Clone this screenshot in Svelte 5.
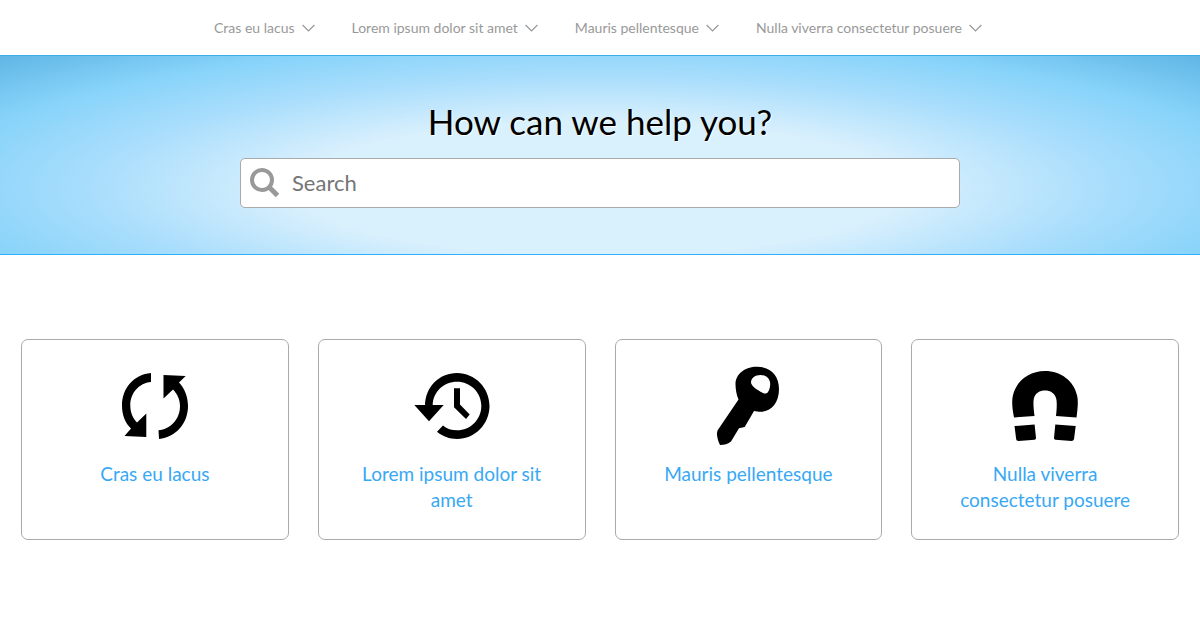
<script lang="ts">
    const categories = [
        { title: "Cras eu lacus", icon: "sync", viewBox: "0 0 110 110" },
        { title: "Lorem ipsum dolor sit amet", icon: "history", viewBox: "-3 0 110 110" },
        { title: "Mauris pellentesque", icon: "key", viewBox: "-2 0 110 110" },
        { title: "Nulla viverra consectetur posuere", icon: "magnet", viewBox: "0 0 110 110" },
    ];

    let query = $state("");
</script>

<nav>
    {#each categories as category}
        <button type="button" class="menu" aria-haspopup="true">
            {category.title}
            <svg class="chevron" viewBox="0 0 13 8" aria-hidden="true">
                <path d="M.6 1 6.500 6.900 12.400 1" />
            </svg>
        </button>
    {/each}
</nav>

<header>
    <h1>How can we help you?</h1>
    <form class="search" role="search" onsubmit={(e) => e.preventDefault()}>
        <svg class="glass" viewBox="0 0 30 30" aria-hidden="true">
            <circle cx="12" cy="12" r="10" />
            <path d="M19 19 27.5 27.5" />
        </svg>
        <input type="search" placeholder="Search" aria-label="Search" bind:value={query}>
    </form>
</header>

<main>
    {#each categories as category}
        <a class="card" href="#{category.icon}">
            <svg class="icon" viewBox={category.viewBox} aria-hidden="true">
                {#if category.icon === "sync"}
                    <path d="M51 23C34 24.500 22 38 22 55.500C22 65 25 73 31 78.500L24.500 86L46.300 87V63.500L37 72.500C32.500 68 30.300 62 30.300 55.500C30.300 43 39 33 51 32Z" />
                    <path d="M59 89C76 87 88 73.500 88 56C88 47 84.500 38 79 32.500L85.700 26L63.500 25V48.500L73 39.500C77.500 44 80 50 80 56C80 69 71 79 58.500 80.300Z" />
                {:else if category.icon === "history"}
                    <path d="M14.300 55H25C25.500 37 39 23 57 23C75 23 89.500 38 89.500 56C89.500 74 75 89 57 89C49.500 89 42.500 86.500 37 81.800L43 75.500C47 78.800 51.500 80.300 57 80.300C70.500 80.300 81.300 69.500 81.300 56C81.300 42.500 70.500 31.700 57 31.700C43.500 31.700 33 42 32.700 55H43.700L29 71.200Z" />
                    <path d="M54 38.300H60V54.500L69.700 64.500L66 69L54 57.300Z" />
                {:else if category.icon === "key"}
                    <path fill-rule="evenodd" d="M40.500 34C40.500 24 50 16.700 62 16.700C75 16.700 84 25 84 39C84 53 76 61.700 66 61.700C63.500 61.700 61 61.300 59 61L49.700 77L44 78.200L36 91.500C33.500 94 29 95 25 95C23.500 92 22 87.500 21.900 83.500L22.500 80.500L43.500 49.500C41.500 45 40.500 39 40.500 34ZM56 32.500C56 36 63 40.500 68 43C70 44 72 43.500 73 42C75 39 75.500 35 75 32C74 27.500 70 25 65.500 25C60 25 56 28 56 32.500Z" />
                {:else}
                    <path d="M24 67.500C22.500 60 21.500 52 22.800 46C26 31 39 21 55 21C71 21 84 31 87.200 46C88.500 52 87.500 60 86.500 67.500L66 66C67 57 67 51 66 48C64.500 43 60.500 40.500 55 40.500C49.500 40.500 45.500 43 44 48C43 51 43.500 58 44.500 66Z" />
                    <path d="M24.500 76 44.600 74.500 46 88Q46 89.500 44.500 89.700L28.500 91Q26.500 91 26.200 89.300ZM65.300 74.500 85.700 76 84 89.300Q83.500 91 81.500 91L65.500 89.700Q64 89.500 64 88Z" />
                {/if}
            </svg>
            <span>{category.title}</span>
        </a>
    {/each}
</main>

<style>
    :global(body) {
        margin: 0;
        background: #fff;
        font-family: Lato, sans-serif;
    }

    nav {
        display: flex;
        justify-content: center;
        gap: 37px;
        height: 55px;
        padding-right: 4px;
    }

    .menu {
        display: flex;
        align-items: center;
        gap: 7px;
        padding: 0;
        border: 0;
        background: none;
        color: #999;
        font-family: inherit;
        font-size: 14px;
        cursor: pointer;
    }

    .chevron {
        width: 13px;
        height: 8px;
        fill: none;
        stroke: #999;
        stroke-width: 1.2;
    }

    header {
        display: flex;
        flex-direction: column;
        align-items: center;
        gap: 14px;
        padding: 42px 20px 46px;
        border-top: 1px solid #3badea;
        border-bottom: 1px solid #2eb0fa;
        background: radial-gradient(ellipse at 50% 67%, #d9f0fd 0%, #d9f0fd 36%, #aadefc 59%, #87d3fa 79%, #5fb6e4 100%);
    }

    h1 {
        margin: 0;
        color: #000;
        font-size: 35px;
        font-weight: 400;
        line-height: 46px;
        text-shadow: 1px 1px 1px #fff;
    }

    .search {
        display: flex;
        align-items: center;
        box-sizing: border-box;
        width: 100%;
        max-width: 720px;
        height: 50px;
        padding: 0 9px;
        gap: 12px;
        border: 1px solid #aaa;
        border-radius: 5px;
        background: #fff;
    }

    .glass {
        flex: none;
        width: 30px;
        height: 30px;
        fill: none;
        stroke: #999;
        stroke-width: 4;
    }

    .glass path {
        stroke-width: 5;
    }

    input {
        flex: 1;
        min-width: 0;
        height: 40px;
        padding: 0 0 2px;
        border: 0;
        outline: none;
        background: none;
        box-sizing: border-box;
        font-family: inherit;
        font-size: 22px;
    }

    input::placeholder {
        color: #757575;
    }

    main {
        display: grid;
        grid-template-columns: repeat(4, 1fr);
        gap: 29px;
        padding: 84px 21px;
    }

    .card {
        display: flex;
        flex-direction: column;
        align-items: center;
        box-sizing: border-box;
        min-height: 201px;
        padding: 10px 40px 24px;
        border: 1px solid #aaa;
        border-radius: 7px;
        color: #38a8f5;
        font-size: 19px;
        line-height: 26px;
        text-align: center;
        text-decoration: none;
    }

    .icon {
        width: 110px;
        height: 110px;
        margin-bottom: 1px;
        fill: #000;
    }

    .card:hover {
        border-color: #2ea3f2;
    }
</style>
